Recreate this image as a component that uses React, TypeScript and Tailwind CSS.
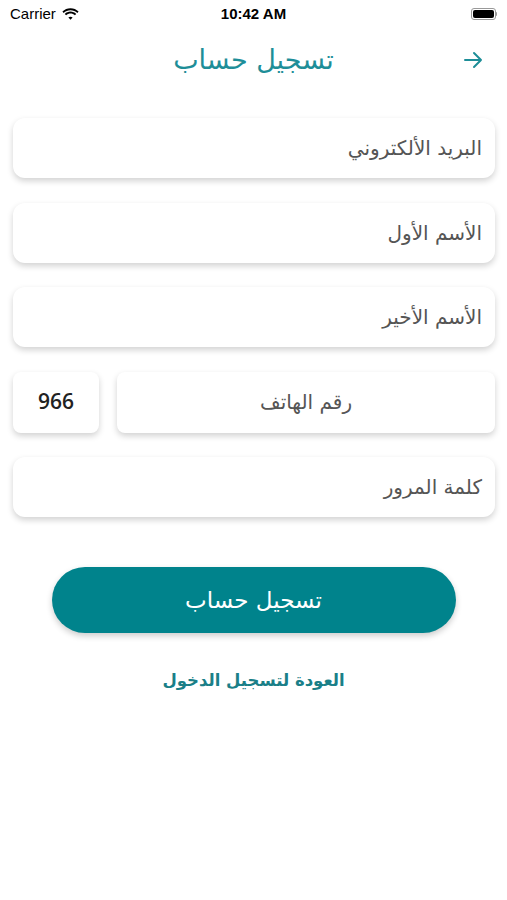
import React from "react";

const ar = { fontFamily: '"DejaVu Sans", "Noto Sans", sans-serif' };

function Field({ label }: { label: string }) {
  return (
    <div className="h-[60px] bg-white rounded-[12px] shadow-[0_3px_6px_rgba(0,0,0,0.18)] flex items-center justify-end px-[13px]">
      <span dir="rtl" className="text-[20px] text-[#555555]" style={ar}>
        {label}
      </span>
    </div>
  );
}

export default function App() {
  return (
    <div className="w-[507px] h-[900px] bg-white relative overflow-hidden" style={{ fontFamily: '"Liberation Sans", Arial, sans-serif' }}>
      {/* status bar */}
      <div className="h-[28px] flex items-center justify-between px-[10px] text-[15px] text-black">
        <div className="flex items-center gap-[6px]">
          <span>Carrier</span>
          <svg width="17" height="12" viewBox="0 0 17 12">
            <path d="M8.5 2.2c2.6 0 5 1 6.8 2.7l1.3-1.4C14.4 1.4 11.6.2 8.5.2S2.6 1.4.4 3.5l1.3 1.4C3.5 3.2 5.9 2.2 8.5 2.2z" fill="#000" />
            <path d="M8.5 5.6c1.7 0 3.2.6 4.4 1.7l1.3-1.4c-1.5-1.4-3.5-2.3-5.7-2.3S4.3 4.5 2.8 5.9l1.3 1.4c1.2-1.1 2.7-1.7 4.4-1.7z" fill="#000" />
            <path d="M8.5 8.8c.8 0 1.5.3 2.1.8L8.5 11.8 6.4 9.6c.6-.5 1.3-.8 2.1-.8z" fill="#000" />
          </svg>
        </div>
        <span className="absolute left-1/2 -translate-x-1/2 font-semibold">10:42 AM</span>
        <div className="flex items-center">
          <div className="w-[25px] h-[12px] rounded-[3px] border border-[#999] p-[1px]">
            <div className="w-full h-full bg-black rounded-[2px]" />
          </div>
          <div className="w-[1.5px] h-[4px] bg-[#999] rounded-r" />
        </div>
      </div>

      {/* header */}
      <div className="relative h-[64px] flex items-center justify-center">
        <span dir="rtl" className="text-[27px] text-[#1e8e98]" style={ar}>
          تسجيل حساب
        </span>
        <svg className="absolute right-[24px] top-[22px]" width="20" height="20" viewBox="0 0 20 20" fill="none" stroke="#1e8e98" strokeWidth="2" strokeLinecap="round" strokeLinejoin="round">
          <path d="M2 10h16M11 3l7 7-7 7" />
        </svg>
      </div>

      {/* form */}
      <div className="pl-[13px] pr-[12px] mt-[26px] flex flex-col gap-[24.5px]">
        <Field label="البريد الألكتروني" />
        <Field label="الأسم الأول" />
        <Field label="الأسم الأخير" />
        <div className="flex gap-[18px]">
          <div className="w-[86px] h-[61px] bg-white rounded-[8px] shadow-[0_3px_6px_rgba(0,0,0,0.18)] flex items-center justify-center">
            <span className="text-[21px] font-semibold text-[#222]" style={{ fontFamily: '"Open Sans", sans-serif' }}>966</span>
          </div>
          <div className="flex-1 h-[61px] bg-white rounded-[8px] shadow-[0_3px_6px_rgba(0,0,0,0.18)] flex items-center justify-center">
            <span dir="rtl" className="text-[20px] text-[#555555]" style={ar}>
              رقم الهاتف
            </span>
          </div>
        </div>
        <Field label="كلمة المرور" />
      </div>

      <div className="flex justify-center mt-[50px]">
        <button className="w-[404px] h-[66px] rounded-full bg-[#00838c] shadow-[0_3px_6px_rgba(0,0,0,0.2)] flex items-center justify-center">
          <span dir="rtl" className="text-[23px] text-white" style={ar}>
            تسجيل حساب
          </span>
        </button>
      </div>

      <div className="flex justify-center mt-[36px]">
        <span dir="rtl" className="text-[16.5px] font-bold text-[#1a7f88]" style={ar}>
          العودة لتسجيل الدخول
        </span>
      </div>
    </div>
  );
}
